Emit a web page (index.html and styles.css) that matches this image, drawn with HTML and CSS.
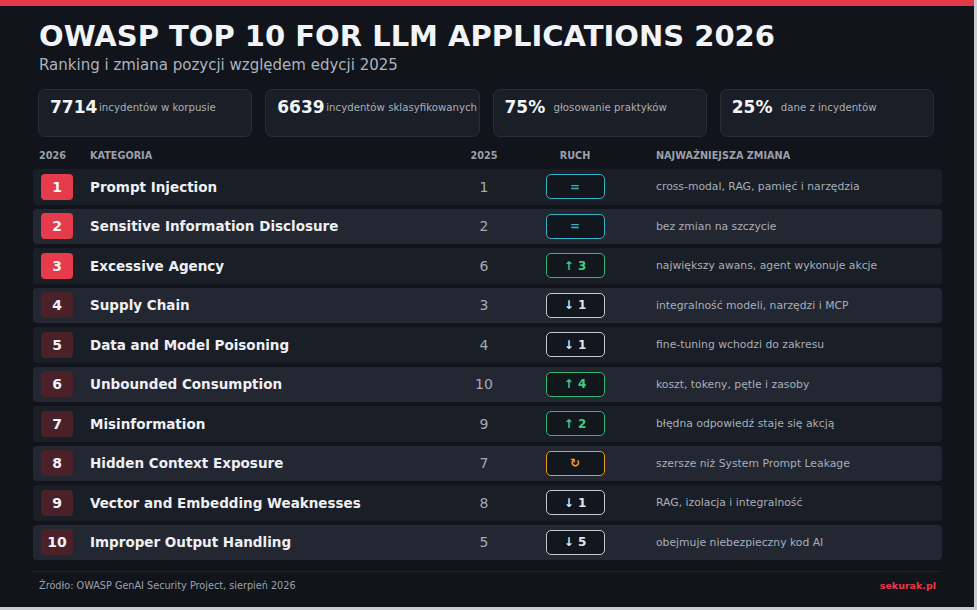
FILE: index.html
```html
<!DOCTYPE html>
<html lang="pl">
<head>
<meta charset="utf-8">
<title>OWASP Top 10 for LLM Applications 2026</title>
<link rel="stylesheet" href="styles.css">
</head>
<body>
<div class="page">
  <div class="topbar"></div>
  <header class="header">
    <h1 class="title">OWASP TOP 10 FOR LLM APPLICATIONS 2026</h1>
    <p class="subtitle">Ranking i zmiana pozycji względem edycji 2025</p>
  </header>
  <section class="stats">
    <div class="stat"><span class="stat-num">7714</span><span class="stat-label">incydentów w korpusie</span></div>
    <div class="stat"><span class="stat-num">6639</span><span class="stat-label">incydentów sklasyfikowanych</span></div>
    <div class="stat"><span class="stat-num">75%</span><span class="stat-label">głosowanie praktyków</span></div>
    <div class="stat"><span class="stat-num">25%</span><span class="stat-label">dane z incydentów</span></div>
  </section>
  <section class="table">
    <div class="thead">
      <span class="th th-rank">2026</span>
      <span class="th">KATEGORIA</span>
      <span class="th th-center">2025</span>
      <span class="th th-center">RUCH</span>
      <span class="th th-change">NAJWAŻNIEJSZA ZMIANA</span>
    </div>
    <div class="row odd">
      <span class="rank top">1</span><span class="cat">Prompt Injection</span><span class="prev">1</span>
      <span class="move-cell"><span class="move same">=</span></span><span class="change">cross-modal, RAG, pamięć i narzędzia</span>
    </div>
    <div class="row even">
      <span class="rank top">2</span><span class="cat">Sensitive Information Disclosure</span><span class="prev">2</span>
      <span class="move-cell"><span class="move same">=</span></span><span class="change">bez zmian na szczycie</span>
    </div>
    <div class="row odd">
      <span class="rank top">3</span><span class="cat">Excessive Agency</span><span class="prev">6</span>
      <span class="move-cell"><span class="move up">↑ 3</span></span><span class="change">największy awans, agent wykonuje akcje</span>
    </div>
    <div class="row even">
      <span class="rank">4</span><span class="cat">Supply Chain</span><span class="prev">3</span>
      <span class="move-cell"><span class="move down">↓ 1</span></span><span class="change">integralność modeli, narzędzi i MCP</span>
    </div>
    <div class="row odd">
      <span class="rank">5</span><span class="cat">Data and Model Poisoning</span><span class="prev">4</span>
      <span class="move-cell"><span class="move down">↓ 1</span></span><span class="change">fine-tuning wchodzi do zakresu</span>
    </div>
    <div class="row even">
      <span class="rank">6</span><span class="cat">Unbounded Consumption</span><span class="prev">10</span>
      <span class="move-cell"><span class="move up">↑ 4</span></span><span class="change">koszt, tokeny, pętle i zasoby</span>
    </div>
    <div class="row odd">
      <span class="rank">7</span><span class="cat">Misinformation</span><span class="prev">9</span>
      <span class="move-cell"><span class="move up">↑ 2</span></span><span class="change">błędna odpowiedź staje się akcją</span>
    </div>
    <div class="row even">
      <span class="rank">8</span><span class="cat">Hidden Context Exposure</span><span class="prev">7</span>
      <span class="move-cell"><span class="move renamed">↻</span></span><span class="change">szersze niż System Prompt Leakage</span>
    </div>
    <div class="row odd">
      <span class="rank">9</span><span class="cat">Vector and Embedding Weaknesses</span><span class="prev">8</span>
      <span class="move-cell"><span class="move down">↓ 1</span></span><span class="change">RAG, izolacja i integralność</span>
    </div>
    <div class="row even">
      <span class="rank">10</span><span class="cat">Improper Output Handling</span><span class="prev">5</span>
      <span class="move-cell"><span class="move down">↓ 5</span></span><span class="change">obejmuje niebezpieczny kod AI</span>
    </div>
  </section>
  <footer class="footer">
    <span class="source">Źródło: OWASP GenAI Security Project, sierpień 2026</span>
    <span class="brand">sekurak.pl</span>
  </footer>
</div>
</body>
</html>
```

FILE: styles.css
```css
* { box-sizing: border-box; }
html, body { margin: 0; padding: 0; }
body {
  background: #c9ccd1;
  font-family: "DejaVu Sans", "Noto Sans", sans-serif;
  width: 977px;
  height: 610px;
  overflow: hidden;
}
.page {
  width: 974px;
  height: 607px;
  background: #11141b;
  display: flex;
  flex-direction: column;
}
.topbar {
  height: 6px;
  background: #e5394a;
  flex: none;
}
.header {
  padding: 0 33px 0 39px;
}
.title {
  margin: 12px 0 0;
  font-size: 29px;
  line-height: 36px;
  font-weight: bold;
  color: #f2f4f8;
}
.subtitle {
  margin: 1px 0 0;
  font-size: 15px;
  line-height: 20px;
  color: #adb3be;
}
.stats {
  margin: 14px 40px 0 38px;
  display: grid;
  grid-template-columns: repeat(4, 1fr);
  gap: 13px;
}
.stat {
  height: 48px;
  background: #1a1e26;
  border: 1px solid #282d36;
  border-radius: 7px;
  padding: 7px 0 0 11px;
  display: flex;
  align-self: start;
  align-items: flex-start;
}
.stat-num {
  flex: none;
  width: 49px;
  white-space: nowrap;
  font-size: 17px;
  line-height: 20px;
  font-weight: bold;
  color: #f2f4f8;
}
.stat-label {
  white-space: nowrap;
  font-size: 10.2px;
  line-height: 20px;
  color: #a9afba;
  position: relative;
  top: 1px;
}
.table {
  margin: 13px 32px 0 33px;
  display: flex;
  flex-direction: column;
  gap: 4px;
}
.thead, .row {
  display: grid;
  grid-template-columns: 57px 364px 60px 122px 1fr;
  align-items: center;
}
.thead {
  height: 12px;
  margin-bottom: 3px;
}
.th {
  font-size: 9.7px;
  line-height: 12px;
  font-weight: bold;
  color: #9ba1ab;
}
.th-rank { padding-left: 6px; }
.th-center { text-align: center; }
.th-change { padding-left: 20px; }
.row {
  height: 35.5px;
  border-radius: 4px;
}
.row.odd { background: #1a1e26; }
.row.even { background: #222732; }
.rank {
  margin-left: 8px;
  width: 32px;
  height: 26px;
  border-radius: 4px;
  background: #4a2129;
  color: #f2f4f8;
  font-weight: bold;
  font-size: 14px;
  display: flex;
  align-items: center;
  justify-content: center;
}
.rank.top { background: #e63b4b; }
.cat {
  font-size: 13.5px;
  font-weight: bold;
  color: #eef0f4;
  white-space: nowrap;
}
.prev {
  text-align: center;
  font-size: 14px;
  color: #a5abb5;
}
.move-cell {
  display: flex;
  justify-content: center;
}
.move {
  width: 59px;
  height: 25px;
  border: 1px solid #c4c9d2;
  border-radius: 5px;
  background: #12161d;
  display: flex;
  align-items: center;
  justify-content: center;
  font-size: 12px;
  font-weight: bold;
  color: #dfe3ea;
}
.move.same { border-color: #36b3c6; color: #36b3c6; }
.move.up { border-color: #2fb96e; color: #3ccf82; }
.move.renamed { border-color: #eb9b2e; color: #f0a030; }
.move.down { border-color: #c4c9d2; color: #e2e6ec; }
.change {
  padding-left: 20px;
  font-size: 10.8px;
  color: #a8aeb8;
  white-space: nowrap;
}
.footer {
  margin: 11px 32px 0 33px;
  border-top: 1px solid #1e232c;
  padding: 8px 6px 0 6px;
  display: flex;
  justify-content: space-between;
  align-items: center;
}
.source {
  font-size: 9.7px;
  color: #9ba1ab;
}
.brand {
  font-size: 9.5px;
  font-weight: bold;
  color: #e5394a;
}
```
